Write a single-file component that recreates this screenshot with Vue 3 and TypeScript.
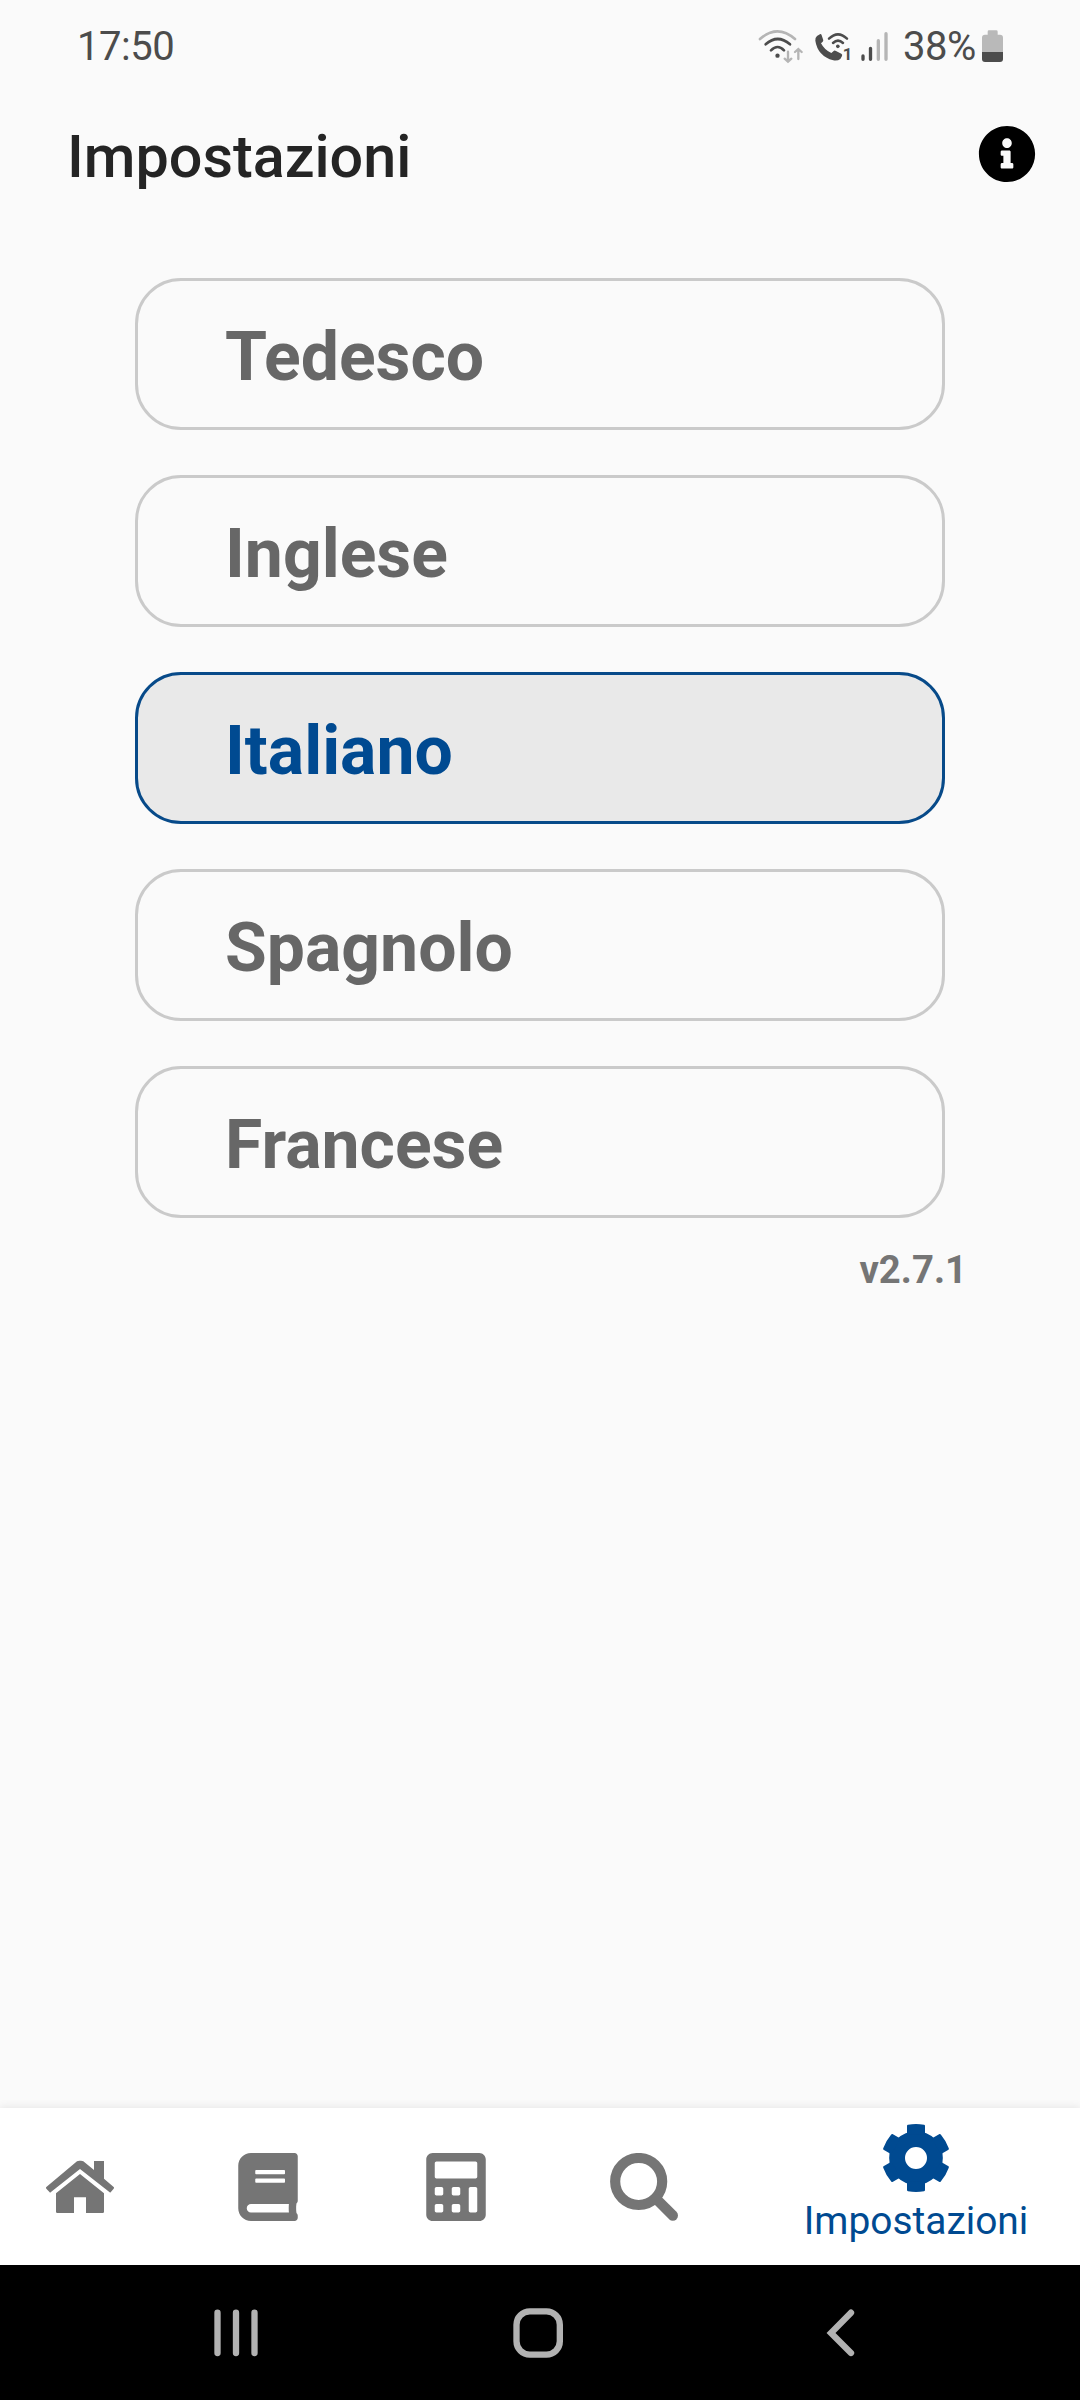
<script setup lang="ts">
import { ref } from 'vue'

const languages: string[] = ['Tedesco', 'Inglese', 'Italiano', 'Spagnolo', 'Francese']
const selected = ref<string>('Italiano')
</script>

<template>
  <div class="screen">
    <header class="status">
      <span class="clock">17:50</span>
      <svg class="wifi" viewBox="54 0 138 210" fill="none" stroke-linecap="round">
        <g stroke="#b5b5b5">
          <path d="M60 87Q112 41 165 87" stroke-width="8" />
          <path d="M144 125V154M134 146L144 155L154 146M175 147V118M165 126L175 117L185 126" stroke-width="7" />
        </g>
        <path d="M77 103Q113 71 150 103M93 121Q113 101 132 121" stroke="#4c4c4c" stroke-width="8" />
        <circle cx="112.500" cy="137" r="6.500" fill="#4c4c4c" />
      </svg>
      <svg class="call" viewBox="225 0 111 210">
        <path d="M231 78L241 72Q244 72 245 76L250 91Q250 95 243 100Q254 121 274 129L282 122Q285 121 288 123L304 131Q308 133 306 138L301 147Q293 153 280 151Q233 138 226 92Q225 83 231 78Z" fill="#4c4c4c" />
        <path d="M267 86Q294 60 321 86M279 99Q294 85 309 99" fill="none" stroke="#4c4c4c" stroke-width="7.500" stroke-linecap="round" />
        <circle cx="293.500" cy="109" r="5.500" fill="#4c4c4c" />
        <text x="308" y="151" class="sim">1</text>
      </svg>
      <svg class="signal" viewBox="363 0 81 210" fill="none" stroke-width="10" stroke-linecap="round">
        <path d="M369 138V148M391.500 115V148" stroke="#4c4c4c" />
        <path d="M415 92V148M438 71V148" stroke="#b5b5b5" />
      </svg>
      <span class="percent">38%</span>
      <svg class="battery" viewBox="726 0 63 210">
        <path d="M743 74V65Q743 61 747 61H769Q773 61 773 65V74H780Q789 74 789 83V126H726V83Q726 74 735 74Z" fill="#b9b9b9" />
        <path d="M726 126H789V147Q789 156 780 156H735Q726 156 726 147Z" fill="#4c4c4c" />
      </svg>
    </header>

    <div class="titlebar">
      <h1>Impostazioni</h1>
      <svg class="info" viewBox="0 0 512 512">
        <path d="M256 8C119.043 8 8 119.083 8 256c0 136.997 111.043 248 248 248s248-111.003 248-248C504 119.083 392.957 8 256 8zm0 110c23.196 0 42 18.804 42 42s-18.804 42-42 42-42-18.804-42-42 18.804-42 42-42zm56 254c0 6.627-5.373 12-12 12h-88c-6.627 0-12-5.373-12-12v-24c0-6.627 5.373-12 12-12h12v-64h-12c-6.627 0-12-5.373-12-12v-24c0-6.627 5.373-12 12-12h64c6.627 0 12 5.373 12 12v100h12c6.627 0 12 5.373 12 12v24z" />
      </svg>
    </div>

    <main class="content">
      <div class="languages">
        <button
          v-for="name in languages"
          :key="name"
          class="language"
          :class="{ active: name === selected }"
          @click="selected = name"
        >
          {{ name }}
        </button>
      </div>
      <div class="version">v2.7.1</div>
    </main>

    <nav class="tabs">
      <svg class="tab" viewBox="138 189 204 204">
        <path d="M139 291L231 214Q234 212 238 212H243Q247 212 250 214L282 240V213H312V266L341 291Q343 293 341 296L332 307Q331 308 329 307L240 237L152 307Q150 309 149 307L139 296Q137 293 139 291Z" />
        <path d="M240 252L312 310V365Q312 369 308 369H258V322H222V369H172Q168 369 168 365V310Z" />
      </svg>
      <svg class="tab" viewBox="-32 0 512 512">
        <path d="M448 360V24c0-13.300-10.700-24-24-24H96C43 0 0 43 0 96v320c0 53 43 96 96 96h328c13.300 0 24-10.700 24-24v-16c0-7.500-3.500-14.300-8.900-18.700-4.200-15.400-4.200-59.300 0-74.700 5.400-4.300 8.900-11.100 8.900-18.600zM128 134c0-3.300 2.700-6 6-6h212c3.300 0 6 2.700 6 6v20c0 3.300-2.700 6-6 6H134c-3.300 0-6-2.700-6-6v-20zm0 64c0-3.300 2.700-6 6-6h212c3.300 0 6 2.700 6 6v20c0 3.300-2.700 6-6 6H134c-3.300 0-6-2.700-6-6v-20zm253.400 250H96c-17.700 0-32-14.300-32-32 0-17.600 14.400-32 32-32h285.400c-1.900 17.100-1.900 46.900 0 64z" />
      </svg>
      <svg class="tab" viewBox="-32 0 512 512">
        <path d="M400 0H48C22.400 0 0 22.400 0 48v416c0 25.600 22.400 48 48 48h352c25.600 0 48-22.400 48-48V48c0-25.600-22.400-48-48-48zM128 435.200c0 6.400-6.400 12.800-12.800 12.800H76.800c-6.400 0-12.800-6.400-12.800-12.800v-38.400c0-6.400 6.400-12.800 12.800-12.800h38.400c6.400 0 12.800 6.400 12.800 12.800v38.400zm0-128c0 6.400-6.400 12.800-12.800 12.800H76.800c-6.400 0-12.800-6.400-12.800-12.800v-38.400c0-6.400 6.400-12.800 12.800-12.800h38.400c6.400 0 12.800 6.400 12.800 12.800v38.400zm128 128c0 6.400-6.400 12.800-12.800 12.800h-38.400c-6.400 0-12.800-6.400-12.800-12.800v-38.400c0-6.400 6.400-12.800 12.800-12.800h38.400c6.400 0 12.800 6.400 12.800 12.800v38.400zm0-128c0 6.400-6.400 12.800-12.800 12.800h-38.400c-6.400 0-12.800-6.400-12.800-12.800v-38.400c0-6.400 6.400-12.800 12.800-12.800h38.400c6.400 0 12.800 6.400 12.800 12.800v38.400zm128 128c0 6.400-6.400 12.800-12.800 12.800h-38.400c-6.400 0-12.800-6.400-12.800-12.800V268.800c0-6.400 6.400-12.800 12.800-12.800h38.400c6.400 0 12.800 6.400 12.800 12.800v166.400zm0-256c0 6.400-6.400 12.800-12.800 12.800H76.800c-6.400 0-12.800-6.400-12.800-12.800V76.800C64 70.400 70.400 64 76.800 64h294.400c6.400 0 12.800 6.400 12.800 12.800v102.400z" />
      </svg>
      <svg class="tab" viewBox="750 189 204 204">
        <g fill="none" stroke="#757575" stroke-linecap="round">
          <circle cx="836" cy="274.500" r="70.500" stroke-width="30.500" />
          <path d="M890 328L938.500 376.500" stroke-width="31" />
        </g>
      </svg>
      <div class="current">
        <svg class="gear" viewBox="-102 -102 204 204">
          <circle r="56.750" fill="none" stroke="#004a91" stroke-width="47.500" />
          <path
            v-for="n in 6"
            :key="n"
            :transform="`rotate(${n * 60})`"
            d="M-27-70V-97Q-27-99-24-99.700Q0-104 24-99.700Q27-99 27-97V-70Z"
            fill="#004a91"
          />
        </svg>
        <span>Impostazioni</span>
      </div>
    </nav>

    <footer class="system">
      <svg viewBox="618 639 180 180">
        <path d="M652.500 668V789M708 668V789M763.500 668V789" />
      </svg>
      <svg viewBox="444 639 180 180">
        <rect x="469.500" y="664" width="130" height="130" rx="40" />
      </svg>
      <svg viewBox="270 639 180 180">
        <path d="M393 668L333 729L393 789" />
      </svg>
    </footer>
  </div>
</template>

<style>
body {
  margin: 0;
}
</style>

<style scoped>
.screen {
  box-sizing: border-box;
  width: 1080px;
  height: 2400px;
  display: flex;
  flex-direction: column;
  background: #fafafa;
  font-family: Roboto, sans-serif;
  overflow: hidden;
}

svg {
  display: block;
  flex: none;
}

.status {
  display: flex;
  align-items: flex-start;
  height: 100px;
  box-sizing: border-box;
  padding: 10px 77px 0 77px;
  color: #4c4c4c;
}

.clock,
.percent {
  font-size: 40px;
  line-height: 47px;
  letter-spacing: -0.5px;
  margin-top: 13px;
  white-space: nowrap;
}

.clock {
  margin-right: auto;
}

.percent {
  width: 79px;
}

.wifi {
  width: 46px;
  height: 70px;
  margin-right: 11px;
}

.call {
  width: 37px;
  height: 70px;
  margin-right: 9px;
}

.sim {
  font-size: 50px;
  font-weight: 700;
  fill: #4c4c4c;
}

.signal {
  width: 27px;
  height: 70px;
  margin-right: 15px;
}

.battery {
  width: 21px;
  height: 70px;
}

.titlebar {
  display: flex;
  justify-content: space-between;
  align-items: flex-start;
  height: 178px;
  box-sizing: border-box;
  padding: 21px 44px 0 67px;
}

h1 {
  margin: 1px 0 0;
  font-size: 59.3px;
  line-height: 70px;
  font-weight: 500;
  color: #242424;
}

.info {
  width: 58px;
  height: 58px;
  margin-top: 4px;
}

.content {
  flex: 1;
}

.languages {
  display: flex;
  flex-direction: column;
  gap: 45px;
  padding: 0 135px;
}

.language {
  box-sizing: border-box;
  height: 152px;
  border: 3px solid #cacaca;
  border-radius: 46px;
  padding: 5px 0 0 87px;
  background: transparent;
  font: 700 67.9px/80px Roboto, sans-serif;
  text-align: left;
  color: #676767;
}

.language.active {
  border-color: #074a89;
  background: #e9e9e9;
  color: #004a91;
}

.version {
  margin-top: 29px;
  padding-right: 113px;
  text-align: right;
  font-size: 38.3px;
  line-height: 45px;
  font-weight: 700;
  color: #757575;
}

.tabs {
  display: flex;
  align-items: flex-start;
  gap: 120px;
  height: 157px;
  box-sizing: border-box;
  padding: 16px 54px 0 46px;
  background: #fff;
  box-shadow: 0 0 9px rgba(0, 0, 0, 0.1);
}

.tab {
  width: 68px;
  height: 68px;
  margin-top: 29px;
  fill: #757575;
}

.current {
  width: 220px;
  margin-left: auto;
  display: flex;
  flex-direction: column;
  align-items: center;
  gap: 6px;
  font-size: 38.9px;
  line-height: 46px;
  color: #004a91;
}

.gear {
  width: 68px;
  height: 68px;
}

.system {
  display: flex;
  align-items: flex-start;
  gap: 242px;
  height: 135px;
  box-sizing: border-box;
  padding: 38px 0 0 206px;
  background: #000;
}

.system svg {
  width: 60px;
  height: 60px;
  fill: none;
  stroke: #b2b2b2;
  stroke-width: 19px;
  stroke-linecap: round;
}
</style>
